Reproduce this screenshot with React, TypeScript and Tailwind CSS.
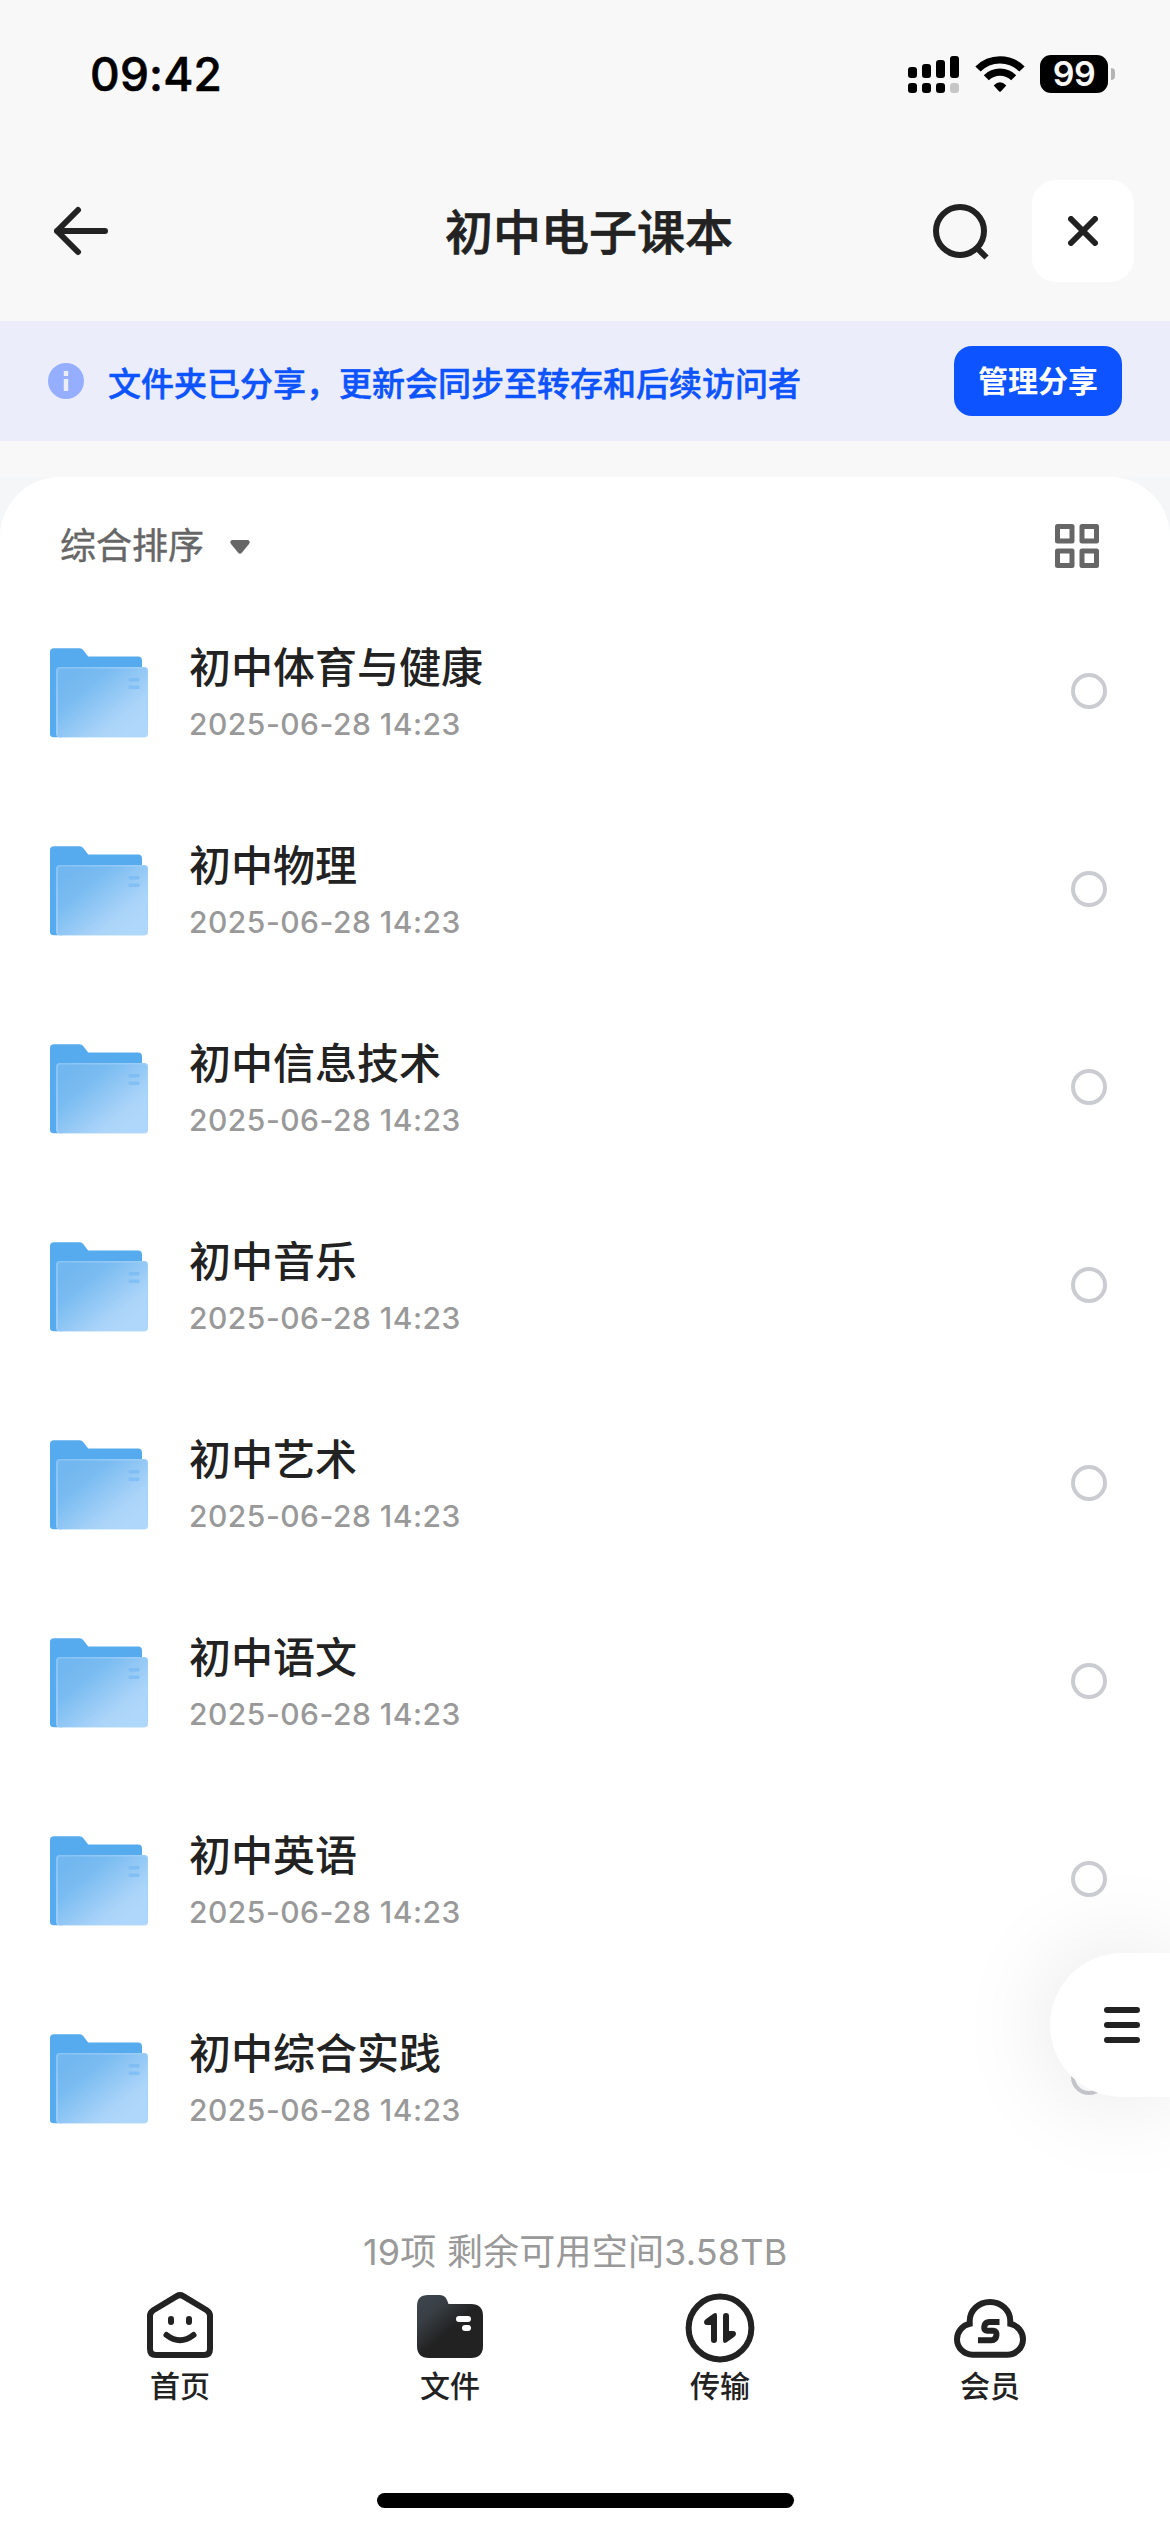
import React from "react";

const names = [
  "初中体育与健康",
  "初中物理",
  "初中信息技术",
  "初中音乐",
  "初中艺术",
  "初中语文",
  "初中英语",
  "初中综合实践",
];

function SignalIcon() {
  const tops = [11, 8, 4, 0];
  return (
    <svg width="51" height="37" viewBox="0 0 51 37">
      {tops.map((t, i) => (
        <rect key={i} x={i * 14} y={t} width="9" height={22 - t} rx="3" fill="#000" />
      ))}
      {tops.map((_, i) => (
        <rect key={"d" + i} x={i * 14} y="27" width="9" height="10" rx="3" fill={i === 3 ? "#c6c6c6" : "#000"} />
      ))}
    </svg>
  );
}

function WifiIcon() {
  return (
    <svg width="50" height="37" viewBox="0 0 50 37">
      <path d="M3 13 A31 31 0 0 1 47 13" fill="none" stroke="#000" strokeWidth="7.4" />
      <path d="M11.300 21.700 A19.500 19.500 0 0 1 38.700 21.700" fill="none" stroke="#000" strokeWidth="7.2" />
      <path d="M18.700 29.600 Q25 23 31.300 29.600 L25.800 35.400 Q25 36.200 24.200 35.400 Z" fill="#000" />
    </svg>
  );
}

function Folder() {
  return (
    <svg width="98" height="90" viewBox="0 0 98 90" className="mt-[3px] shrink-0">
      <defs>
        <linearGradient id="front" x1="0.1" y1="0.15" x2="0.85" y2="0.85">
          <stop offset="0" stopColor="#72b7ef" />
          <stop offset="0.25" stopColor="#7abcf1" />
          <stop offset="0.8" stopColor="#abd4f9" />
          <stop offset="1" stopColor="#afd7fb" />
        </linearGradient>
        <linearGradient id="edge" x1="0" y1="0" x2="1" y2="1">
          <stop offset="0" stopColor="#86c3f4" />
          <stop offset="0.6" stopColor="#a3d0f9" />
          <stop offset="1" stopColor="#afd7fb" />
        </linearGradient>
      </defs>
      <path
        d="M0 4 Q0 .3 4 .3 H29.500 Q32 .3 33.600 2.400 L38.200 8.400 H88 Q92 8.400 92 12.400 V60 L12 89.300 H4 Q0 89.300 0 86 Z"
        fill="#55abee"
      />
      <rect x="6" y="19" width="92" height="70.300" rx="3.500" fill="url(#edge)" />
      <rect x="8" y="20.600" width="89" height="68.700" rx="3" fill="url(#front)" />
      <rect x="78.500" y="30" width="11" height="3.500" rx="1" fill="#7fbdf4" />
      <rect x="78.500" y="37.500" width="11" height="3.500" rx="1" fill="#82bff5" />
    </svg>
  );
}

function HomeIcon() {
  return (
    <svg width="72" height="72" viewBox="0 0 72 72" fill="none" stroke="#222" strokeWidth="6" strokeLinecap="round">
      <path d="M32.800 7.100 Q36 5.100 39.200 7.100 L62.700 21.200 Q66 23.300 66 27 V60 Q66 66 60 66 H12 Q6 66 6 60 V27 Q6 23.300 9.300 21.200 Z" />
      <path d="M27 30 V33 M45 30 V33" />
      <path d="M22.500 46 Q36 56.500 49.500 46" />
    </svg>
  );
}

function FilesIcon() {
  return (
    <svg width="72" height="72" viewBox="0 0 72 72">
      <defs>
        <linearGradient id="files" x1="0.1" y1="0.12" x2="0.5" y2="0.55">
          <stop offset="0" stopColor="#3c434a" />
          <stop offset="0.35" stopColor="#383e44" />
          <stop offset="1" stopColor="#222" />
        </linearGradient>
      </defs>
      <path
        d="M3 17 Q3 6 14 6 H25 Q31 6 33 11 L34.500 15 H57 Q69 15 69 27 V57 Q69 69 57 69 H15 Q3 69 3 57 Z"
        fill="url(#files)"
      />
      <rect x="42" y="27" width="15" height="6" rx="3" fill="#fff" />
      <rect x="48" y="36" width="9" height="6" rx="3" fill="#fff" />
    </svg>
  );
}

function TransferIcon() {
  return (
    <svg width="72" height="72" viewBox="0 0 72 72" className="overflow-visible">
      <circle cx="36" cy="39" r="31.400" fill="none" stroke="#222" strokeWidth="6" />
      <path
        d="M33 26.500 V51 a3 3 0 0 1 -6 0 V36 H23 Q20 36 20 33 Q20 31.500 22 30 L29 25 Q33 22.500 33 26.500 Z"
        fill="#222"
      />
      <path
        d="M39 51.500 V27 a3 3 0 0 1 6 0 V42 H49 Q52 42 52 45 Q52 46.500 50 48 L43 53 Q39 55.500 39 51.500 Z"
        fill="#222"
      />
    </svg>
  );
}

function MemberIcon() {
  return (
    <svg width="78" height="72" viewBox="0 0 78 72" fill="none" stroke="#222" strokeWidth="6">
      <path d="M18.700 34.800 V32 A20.300 19 0 0 1 59.300 32 V34.800 A16 16 0 0 1 72 50.200 A15.700 15.700 0 0 1 56.300 65.800 H21.700 A15.700 15.700 0 0 1 6 50.200 A16 16 0 0 1 18.700 34.800 Z" />
      <path d="M48.500 33 H38.500 Q34 33 33.300 37.500 Q32.700 41.800 36 41.800 H42.500 Q46 41.800 45.400 46.500 Q44.700 51.200 40.500 51.200 H27" />
    </svg>
  );
}

const tabs = [
  { label: "首页", icon: <HomeIcon /> },
  { label: "文件", icon: <FilesIcon /> },
  { label: "传输", icon: <TransferIcon /> },
  { label: "会员", icon: <MemberIcon /> },
];

export default function App() {
  return (
    <div className="relative flex h-[2532px] w-[1170px] flex-col overflow-hidden bg-[#f8f8f8] font-['Inter','Noto_Sans_CJK_SC',sans-serif] text-[#222]">
      <div className="flex h-[148px] shrink-0 items-center justify-between pr-[55px] pl-[90px]">
        <span className="text-[46px] leading-[60px] font-medium tracking-[0.2px] text-black [-webkit-text-stroke:0.6px_#000]">09:42</span>
        <div className="flex items-center">
          <SignalIcon />
          <div className="ml-4">
            <WifiIcon />
          </div>
          <div className="ml-[15px] flex h-[38px] w-[68px] items-center justify-center rounded-[11px] bg-black text-[34px] leading-[38px] font-semibold tracking-[-0.5px] text-[#f8f8f8]">
            99
          </div>
          <div className="ml-[3px] h-3 w-1 rounded-r-full bg-[#b4b4b4]" />
        </div>
      </div>

      <div className="grid h-[173px] shrink-0 grid-cols-[445px_288px_1fr] pr-9 pb-[7px]">
        <div className="flex items-center pl-[54px]">
          <svg width="54" height="50" viewBox="0 0 54 50" fill="none" stroke="#222" strokeWidth="6" strokeLinecap="round" strokeLinejoin="round">
            <path d="M24 4 L3 25 L24 46 M3 25 H51" />
          </svg>
        </div>
        <h1 className="flex items-center pt-[3px] text-[48px] leading-[60px] font-medium whitespace-nowrap [-webkit-text-stroke:0.7px_#222]">初中电子课本</h1>
        <div className="flex items-center justify-end">
          <svg width="58" height="58" viewBox="0 0 58 58" fill="none" stroke="#222" strokeWidth="6">
            <circle cx="28" cy="29" r="24" />
            <path d="M44.500 45.500 L54.500 55.500" />
          </svg>
          <div className="ml-[42px] flex size-[102px] items-center justify-center rounded-3xl bg-white">
            <svg width="30" height="30" viewBox="0 0 30 30" stroke="#222" strokeWidth="6" strokeLinecap="round">
              <path d="M3 3 L27 27 M27 3 L3 27" />
            </svg>
          </div>
        </div>
      </div>

      <div className="flex h-[120px] shrink-0 items-center bg-[#ebeefa] pr-12 pl-12">
        <svg width="36" height="36" viewBox="0 0 36 36">
          <circle cx="18" cy="18" r="18" fill="#96aeff" />
          <path d="M18 8 V13 M18 16 V28" stroke="#ebeefa" strokeWidth="4.400" />
        </svg>
        <span className="mt-[5px] ml-6 text-[33px] leading-[48px] font-medium whitespace-nowrap text-[#0d53ff] [-webkit-text-stroke:0.5px_#0d53ff]">
          文件夹已分享，更新会同步至转存和后续访问者
        </span>
        <button className="ml-auto h-[70px] w-[168px] rounded-[18px] bg-[#0d53ff] text-[30px] leading-[70px] font-bold text-white">
          管理分享
        </button>
      </div>

      <div className="mt-9 flex flex-1 flex-col bg-[#f5f6f8]">
        <div className="flex flex-1 flex-col rounded-t-[60px] bg-white">
          <div className="flex h-[115px] shrink-0 items-center justify-between pt-[22px] pr-[71px] pl-[60px]">
            <div className="flex items-center text-[#666]">
              <span className="text-[36px] leading-[48px] [-webkit-text-stroke:0.4px_#666]">综合排序</span>
              <svg width="22" height="16" viewBox="0 0 22 16" className="mt-[3px] ml-[25px]">
                <path d="M3.500 1 H18.500 Q22 1.500 20 5 L12.800 13.800 Q11 15.800 9.200 13.800 L2 5 Q0 1.500 3.500 1 Z" fill="#666" />
              </svg>
            </div>
            <svg width="44" height="44" viewBox="0 0 44 44" fill="none" stroke="#666" strokeWidth="5" strokeLinejoin="round">
              <rect x="2.500" y="2.500" width="14.500" height="14.500" />
              <rect x="27" y="2.500" width="14.500" height="14.500" />
              <rect x="2.500" y="27" width="14.500" height="14.500" />
              <rect x="27" y="27" width="14.500" height="14.500" />
            </svg>
          </div>

          <ul className="flex flex-col">
            {names.map((name) => (
              <li key={name} className="flex h-[198px] items-center pr-[63px] pl-[50px]">
                <Folder />
                <div className="ml-[41px] flex flex-col pt-[9px]">
                  <span className="text-[42px] leading-[56px] font-medium">{name}</span>
                  <span className="text-[30px] leading-[56px] font-medium tracking-[0.5px] text-[#999]">2025-06-28 14:23</span>
                </div>
                <span className="ml-auto size-9 rounded-full border-4 border-[#cbcbd2]" />
              </li>
            ))}
          </ul>

          <p className="mt-[52px] ml-[363px] text-[36px] leading-[48px] tracking-[0.2px] whitespace-nowrap text-[#999]">
            19项 剩余可用空间3.58TB
          </p>
          <nav className="mt-[13px] grid grid-cols-4 px-[45px]">
            {tabs.map((t) => (
              <div key={t.label} className="flex flex-col items-center">
                {t.icon}
                <span className="mt-[3px] text-[30px] leading-[44px] font-medium">{t.label}</span>
              </div>
            ))}
          </nav>
          <div className="mt-auto mb-6 ml-[377px] h-[15px] w-[417px] rounded-full bg-black" />
        </div>
      </div>

      <button className="absolute top-[1953px] right-0 flex h-36 w-[120px] flex-col items-start justify-center gap-[9px] rounded-l-full bg-white pl-[54px] shadow-[0_0_100px_rgba(0,0,0,0.11)]">
        <span className="h-1.5 w-9 rounded-full bg-[#222]" />
        <span className="h-1.5 w-9 rounded-full bg-[#222]" />
        <span className="h-1.5 w-9 rounded-full bg-[#222]" />
      </button>
    </div>
  );
}
